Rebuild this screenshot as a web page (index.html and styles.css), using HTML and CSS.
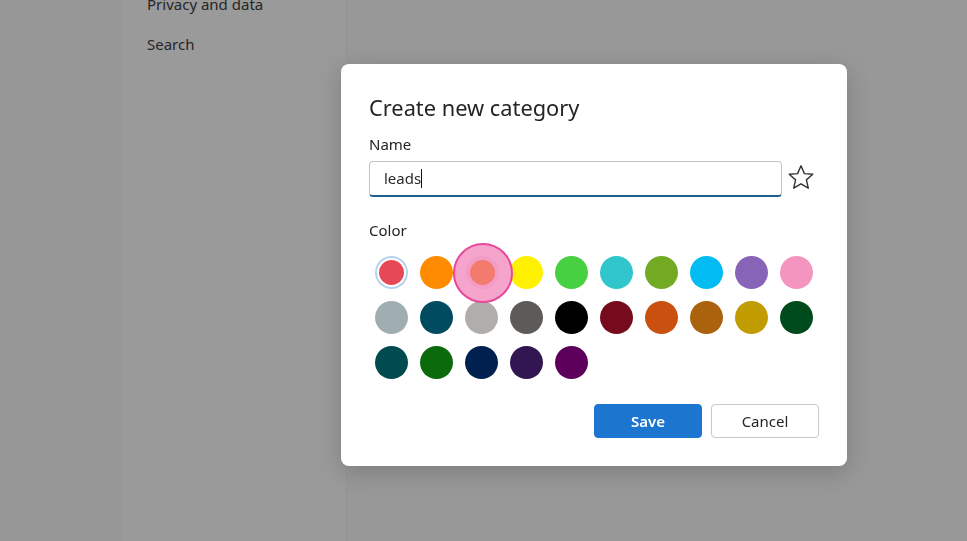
FILE: index.html
```html
<!DOCTYPE html>
<html lang="en">
<head>
    <meta charset="UTF-8">
    <meta name="viewport" content="width=device-width, initial-scale=1.0">
    <title>Create new category</title>
    <link rel="stylesheet" href="styles.css">
</head>
<body>
    <div class="page">
        <div class="gutter"></div>
        <nav class="sidebar">
            <div class="nav-item">Privacy and data</div>
            <div class="nav-item">Search</div>
        </nav>
        <main class="main"></main>
    </div>

    <div class="dialog">
        <h2 class="title">Create new category</h2>
        <div class="label">Name</div>
        <div class="name-row">
            <div class="input">leads<span class="caret"></span></div>
            <div class="star">
                <svg width="28" height="27" viewBox="0 0 28 27">
                    <path d="M14 1.8 L17.4 9.6 L25.8 10.3 L19.4 15.9 L21.3 24.2 L14 19.8 L6.7 24.2 L8.6 15.9 L2.2 10.3 L10.6 9.6 Z" fill="none" stroke="#333" stroke-width="1.4" stroke-linejoin="round"/>
                </svg>
            </div>
        </div>
        <div class="label color-label">Color</div>
        <div class="swatches">
            <div class="cell"><span class="dot selected" style="background:#e74856"></span></div>
            <div class="cell"><span class="dot" style="background:#ff8c00"></span></div>
            <div class="cell"><span class="hover-ring"><span class="dot small" style="background:#f27b6d"></span></span></div>
            <div class="cell"><span class="dot" style="background:#fff100"></span></div>
            <div class="cell"><span class="dot" style="background:#47d041"></span></div>
            <div class="cell"><span class="dot" style="background:#30c6cc"></span></div>
            <div class="cell"><span class="dot" style="background:#73aa24"></span></div>
            <div class="cell"><span class="dot" style="background:#00bcf2"></span></div>
            <div class="cell"><span class="dot" style="background:#8764b8"></span></div>
            <div class="cell"><span class="dot" style="background:#f495bf"></span></div>

            <div class="cell"><span class="dot" style="background:#a0aeb2"></span></div>
            <div class="cell"><span class="dot" style="background:#004b60"></span></div>
            <div class="cell"><span class="dot" style="background:#b1adab"></span></div>
            <div class="cell"><span class="dot" style="background:#5d5a58"></span></div>
            <div class="cell"><span class="dot" style="background:#000000"></span></div>
            <div class="cell"><span class="dot" style="background:#750b1c"></span></div>
            <div class="cell"><span class="dot" style="background:#ca5010"></span></div>
            <div class="cell"><span class="dot" style="background:#ab620d"></span></div>
            <div class="cell"><span class="dot" style="background:#c19c00"></span></div>
            <div class="cell"><span class="dot" style="background:#004b1c"></span></div>

            <div class="cell"><span class="dot" style="background:#004b50"></span></div>
            <div class="cell"><span class="dot" style="background:#0b6a0b"></span></div>
            <div class="cell"><span class="dot" style="background:#002050"></span></div>
            <div class="cell"><span class="dot" style="background:#321651"></span></div>
            <div class="cell"><span class="dot" style="background:#5c005c"></span></div>
        </div>
        <div class="actions">
            <button class="btn primary">Save</button>
            <button class="btn">Cancel</button>
        </div>
    </div>
</body>
</html>
```

FILE: styles.css
```css
* {
    box-sizing: border-box;
}

html, body {
    margin: 0;
    padding: 0;
    height: 100%;
    overflow: hidden;
}

body {
    font-family: 'Noto Sans', 'Open Sans', sans-serif;
    color: #242424;
    background-color: #989898;
}

.page {
    display: flex;
    height: 100%;
}

.gutter {
    width: 122px;
    flex-shrink: 0;
    background-color: #979797;
}

.sidebar {
    width: 225px;
    flex-shrink: 0;
    background-color: #9a9a9a;
    border-left: 1px solid #9c9c9c;
    border-right: 1px solid #959595;
    padding-left: 24px;
    margin-top: -16px;
}

.nav-item {
    height: 40px;
    line-height: 40px;
    font-size: 15px;
    color: #262626;
}

.main {
    flex: 1;
    background-color: #989898;
}

.dialog {
    position: fixed;
    left: 341px;
    top: 64px;
    width: 506px;
    height: 402px;
    background: #fff;
    border-radius: 8px;
    padding: 29px 28px 28px 28px;
    box-shadow: 0 6px 24px rgba(0, 0, 0, 0.18);
}

.title {
    margin: 0;
    font-size: 21.8px;
    font-weight: 400;
    line-height: 30px;
    color: #242424;
}

.label {
    margin-top: 11px;
    font-size: 15px;
    line-height: 20px;
}

.name-row {
    display: flex;
    align-items: center;
    margin-top: 7px;
}

.input {
    flex: 1;
    height: 36px;
    border: 1px solid #c4c4c4;
    border-bottom: 2px solid #1f5f8f;
    border-radius: 4px;
    padding-left: 14px;
    font-size: 15px;
    line-height: 33px;
    color: #2a2a2a;
}

.caret {
    display: inline-block;
    width: 1px;
    height: 19px;
    background: #111;
    vertical-align: -4px;
}

.star {
    width: 37px;
    display: flex;
    justify-content: center;
    margin-top: -4px;
}

.color-label {
    margin-top: 23px;
}

.swatches {
    display: grid;
    grid-template-columns: repeat(10, 45px);
    grid-auto-rows: 45px;
    margin-top: 10px;
}

.cell {
    position: relative;
    display: flex;
    align-items: center;
    justify-content: center;
}

.dot {
    display: block;
    width: 33px;
    height: 33px;
    border-radius: 50%;
}

.dot.selected {
    width: 25px;
    height: 25px;
    box-shadow: 0 0 0 2px #fff, 0 0 0 4px #b7d2ef;
}

.dot.small {
    width: 25px;
    height: 25px;
    box-shadow: 0 0 0 4px #f39dc6;
}

.hover-ring {
    position: absolute;
    left: 50%;
    top: 50%;
    width: 60px;
    height: 60px;
    margin: -30px 0 0 -29px;
    border-radius: 50%;
    background: #f5a5cc;
    border: 2px solid #e8479a;
    display: flex;
    align-items: center;
    justify-content: center;
    z-index: 2;
}

.actions {
    display: flex;
    justify-content: flex-end;
    gap: 9px;
    margin-top: 19px;
}

.btn {
    width: 108px;
    height: 34px;
    border: 1px solid #c8c8c8;
    border-radius: 4px;
    background: #fff;
    color: #242424;
    font-family: inherit;
    font-size: 15px;
    cursor: pointer;
}

.btn.primary {
    background: #1c75cf;
    border-color: #1c75cf;
    color: #fff;
    font-weight: 600;
}
```
